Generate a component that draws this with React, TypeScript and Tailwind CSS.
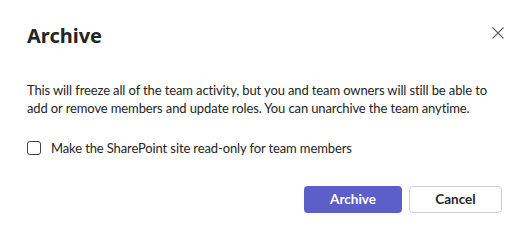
export default function App() {
  return (
    <div
      className="w-[528px] h-[244px] bg-white text-[#242424] pl-[27px] pr-[26px] pt-[22px]"
      style={{ fontFamily: '"Noto Sans", "Open Sans", sans-serif' }}
    >
      <div className="flex items-start justify-between">
        <h1 className="text-[20px] leading-[28px] font-bold">Archive</h1>
        <button className="mt-[5px] mr-[-2px] text-[#616161]">
          <svg width="12" height="12" viewBox="0 0 12 12" fill="none" stroke="currentColor" strokeWidth="1.1">
            <path d="M0.5 0.5 L11.5 11.5 M11.5 0.5 L0.5 11.5" />
          </svg>
        </button>
      </div>
      <div style={{ fontFamily: "Lato, sans-serif" }}>
        <p className="mt-[31px] text-[13px] leading-[18px] tracking-[-0.12px] whitespace-nowrap">
          This will freeze all of the team activity, but you and team owners will still be able to
          <br />
          add or remove members and update roles. You can unarchive the team anytime.
        </p>
        <label className="mt-[21px] flex items-center gap-[10px] text-[13px] leading-[20px] tracking-[-0.12px]">
          <span className="w-[14px] h-[14px] rounded-[3px] border border-[#424242]" />
          Make the SharePoint site read-only for team members
        </label>
        <div className="mt-[28px] flex justify-end gap-[7px]">
          <button className="w-[98px] h-[27px] rounded-[4px] bg-[#5b5fc7] text-white text-[13.5px] font-bold">
            Archive
          </button>
          <button className="w-[93px] h-[27px] rounded-[4px] border border-[#d1d1d1] bg-white text-[13.5px] font-bold">
            Cancel
          </button>
        </div>
      </div>
    </div>
  );
}
